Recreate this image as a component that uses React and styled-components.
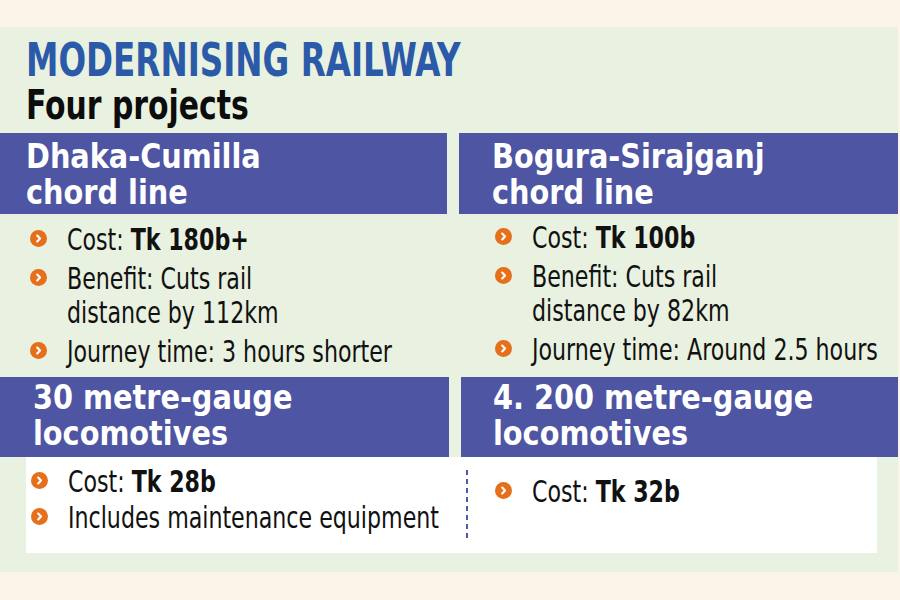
import React from "react";
import styled, { createGlobalStyle } from "styled-components";

const GlobalStyle = createGlobalStyle`
  html, body {
    margin: 0;
    padding: 0;
    background: #fdf4e9;
  }
  body {
    font-family: "DejaVu Sans Condensed", "Liberation Sans Narrow", "DejaVu Sans", sans-serif;
    color: #111;
  }
`;

const Page = styled.div`
  width: 900px;
  height: 600px;
  box-sizing: border-box;
  padding: 27px 2px 28px 0;
  overflow: hidden;
`;

const Panel = styled.div`
  height: 545px;
  background: #e9f1e0;
  display: flex;
  flex-direction: column;
`;

const Header = styled.header`
  height: 106px;
  box-sizing: border-box;
  padding: 9px 0 0 26px;
`;

const Title = styled.h1`
  margin: 0;
  font-size: 47px;
  line-height: 48px;
  font-weight: 700;
  color: #2a5aa8;
`;

const Subtitle = styled.h2`
  margin: 2px 0 0;
  font-size: 40px;
  line-height: 38px;
  font-weight: 700;
  color: #0c0c0c;
`;

const Squeeze = styled.span`
  display: inline-block;
  white-space: nowrap;
  transform: scaleX(${(p) => p.$k});
  transform-origin: 0 50%;
`;

const Row = styled.div`
  display: grid;
  grid-template-columns: ${(p) => p.$cols};
  column-gap: 12px;
  margin-top: ${(p) => p.$top || 0}px;
`;

const Column = styled.section`
  display: flex;
  flex-direction: column;
`;

const Bar = styled.div`
  background: #4e55a2;
  color: #fff;
  font-weight: 700;
  font-size: 34px;
  line-height: 36px;
  padding: ${(p) => p.$pad};
`;

const List = styled.ul`
  list-style: none;
  margin: 0;
  padding: ${(p) => p.$pad};
  display: flex;
  flex-direction: column;
  gap: ${(p) => p.$gap || 5}px;
`;

const Item = styled.li`
  display: flex;
  align-items: flex-start;
  gap: 20px;
  font-size: 30px;
  line-height: 34px;
`;

const Dot = styled.svg`
  flex: none;
  width: 17px;
  height: 17px;
  margin-top: 7px;
`;

const Strong = styled.b`
  font-weight: 700;
`;

const WhiteBox = styled.div`
  margin: 0 21px 0 26px;
  height: 96px;
  background: #fff;
  display: flex;
`;

const BoxColumn = styled.div`
  width: ${(p) => p.$w}px;
  flex: none;
`;

const Divider = styled.div`
  flex: none;
  width: 2px;
  margin: 13px 0 11px;
  background: repeating-linear-gradient(
    to bottom,
    #4f5aa3 0 5px,
    transparent 5px 9px
  );
`;

const Bullet = () => (
  <Dot viewBox="0 0 17 17">
    <circle cx="8.5" cy="8.5" r="8.5" fill="#e66f1b" />
    <path
      d="M7.2 5.6 L10 8.5 L7.2 11.4"
      fill="none"
      stroke="#fff"
      strokeWidth="2.2"
      strokeLinecap="round"
      strokeLinejoin="round"
    />
  </Dot>
);

const BODY_K = 0.82;
const HEAD_K = 0.94;

const Point = ({ children }) => (
  <Item>
    <Bullet />
    <Squeeze $k={BODY_K}>{children}</Squeeze>
  </Item>
);

const Heading = ({ pad, children }) => (
  <Bar $pad={pad}>
    <Squeeze $k={HEAD_K}>{children}</Squeeze>
  </Bar>
);

const App = () => {
  return (
    <Page>
      <GlobalStyle />
      <Panel>
        <Header>
          <Title>
            <Squeeze $k={0.77}>MODERNISING RAILWAY</Squeeze>
          </Title>
          <Subtitle>
            <Squeeze $k={0.83}>Four projects</Squeeze>
          </Subtitle>
        </Header>

        <Row $cols="447px 439px">
          <Column>
            <Heading pad="5px 0 4px 26px">
              Dhaka-Cumilla
              <br />
              chord line
            </Heading>
            <List $pad="9px 0 0 30px">
              <Point>
                Cost: <Strong>Tk 180b+</Strong>
              </Point>
              <Point>
                Benefit: Cuts rail
                <br />
                distance by 112km
              </Point>
              <Point>Journey time: 3 hours shorter</Point>
            </List>
          </Column>
          <Column>
            <Heading pad="5px 0 4px 33px">
              Bogura-Sirajganj
              <br />
              chord line
            </Heading>
            <List $pad="7px 0 0 36px">
              <Point>
                Cost: <Strong>Tk 100b</Strong>
              </Point>
              <Point>
                Benefit: Cuts rail
                <br />
                distance by 82km
              </Point>
              <Point>Journey time: Around 2.5 hours</Point>
            </List>
          </Column>
        </Row>

        <Row $cols="449px 437px" $top={8}>
          <Heading pad="2px 0 6px 33px">
            30 metre-gauge
            <br />
            locomotives
          </Heading>
          <Heading pad="2px 0 6px 32px">
            4. 200 metre-gauge
            <br />
            locomotives
          </Heading>
        </Row>

        <WhiteBox>
          <BoxColumn $w={440}>
            <List $pad="8px 0 0 5px" $gap={2}>
              <Point>
                Cost: <Strong>Tk 28b</Strong>
              </Point>
              <Point>Includes maintenance equipment</Point>
            </List>
          </BoxColumn>
          <Divider />
          <BoxColumn $w={400}>
            <List $pad="18px 0 0 27px">
              <Point>
                Cost: <Strong>Tk 32b</Strong>
              </Point>
            </List>
          </BoxColumn>
        </WhiteBox>
      </Panel>
    </Page>
  );
};

export default App;
